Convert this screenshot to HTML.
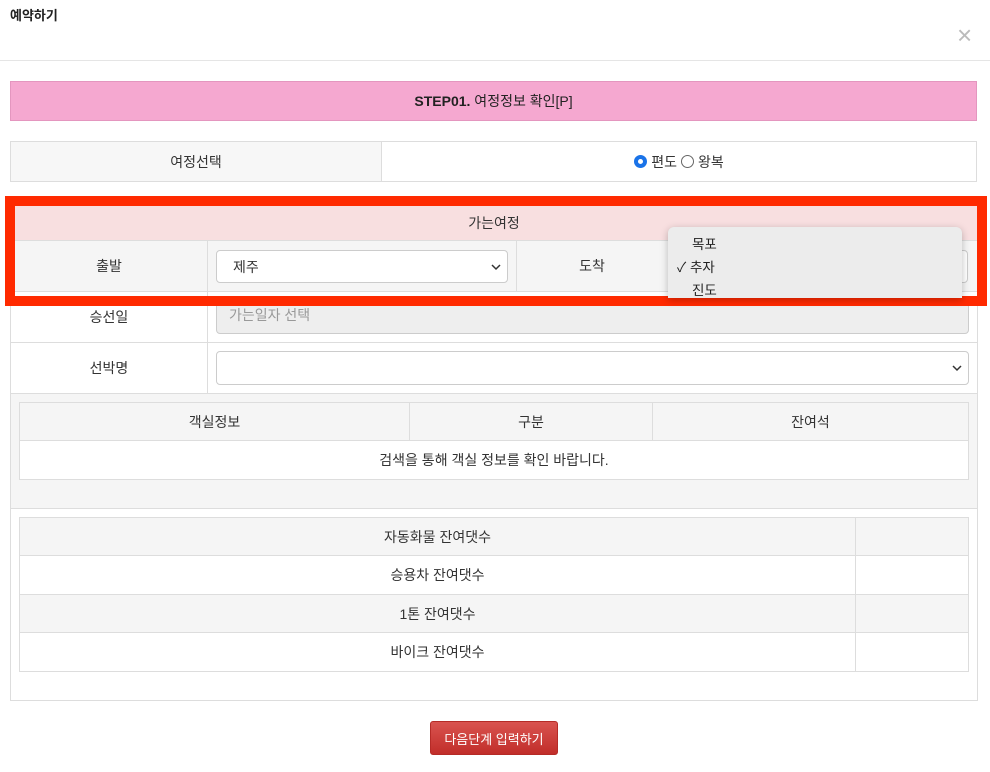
<!DOCTYPE html>
<html><head><meta charset="utf-8"><style>
*{box-sizing:border-box;margin:0;padding:0}
body{width:990px;height:772px;background:#fff;font-family:"Liberation Sans","Noto Sans CJK KR",sans-serif;font-size:14px;color:#333;position:relative;overflow:hidden}
.a{position:absolute}
.c{display:flex;align-items:center;justify-content:center}
.b{border:1px solid #ddd}
.sel{position:absolute;background:#fff;border:1px solid #ccc;border-radius:4px;display:flex;align-items:center;padding-left:16px;font-size:14px}
.sel svg{position:absolute;right:6px;top:50%;margin-top:-4px}
</style></head><body>
<div class="a" style="left:10px;top:5px;font-size:13px;font-weight:bold;color:#222">예약하기</div>
<div class="a" style="left:957px;top:20px;font-size:26px;color:#bbb;line-height:30px">×</div>
<div class="a" style="left:0;top:60px;width:990px;height:1px;background:#e5e5e5"></div>

<div class="a c" style="left:10px;top:81px;width:967px;height:40px;background:#f5a8d0;border:1px solid #e496bf;color:#222"><b>STEP01.</b>&nbsp;여정정보 확인[P]</div>

<div class="a b" style="left:10px;top:141px;width:967px;height:41px"></div>
<div class="a c" style="left:11px;top:142px;width:370px;height:39px;background:#f7f7f7">여정선택</div>
<div class="a" style="left:381px;top:142px;width:1px;height:39px;background:#ddd"></div>
<div class="a c" style="left:382px;top:142px;width:594px;height:39px;">
<span style="display:inline-block;width:13px;height:13px;border-radius:50%;border:4px solid #1a73e8;margin-right:4px"></span>편도&nbsp;<span style="display:inline-block;width:13px;height:13px;border-radius:50%;border:1px solid #666;margin-right:4px"></span>왕복</div>

<div class="a b" style="left:10px;top:200px;width:968px;height:501px"></div>
<div class="a c" style="left:11px;top:206px;width:966px;height:34px;background:#f8dfe0;color:#333">가는여정</div>
<div class="a" style="left:11px;top:240px;width:966px;height:52px;background:#f5f5f5;border-top:1px solid #ddd;border-bottom:1px solid #ddd"></div>
<div class="a c" style="left:11px;top:240px;width:196px;height:52px">출발</div>
<div class="a" style="left:207px;top:240px;width:1px;height:103px;background:#ddd"></div>
<div class="sel" style="left:216px;top:250px;width:292px;height:33px">제주<svg width="10" height="8"><path d="M1 2l4 4 4-4" fill="none" stroke="#333" stroke-width="1.5"/></svg></div>
<div class="a" style="left:516px;top:240px;width:1px;height:52px;background:#ddd"></div>
<div class="a c" style="left:517px;top:240px;width:150px;height:52px">도착</div>
<div class="sel" style="left:676px;top:250px;width:292px;height:33px"></div>

<div class="a c" style="left:11px;top:292px;width:196px;height:51px;border-bottom:1px solid #ddd;">승선일</div>
<div class="a" style="left:216px;top:297px;width:753px;height:37px;background:#eee;border:1px solid #ccc;border-radius:4px;padding-left:12px;line-height:35px;color:#999">가는일자 선택</div>
<div class="a" style="left:11px;top:342px;width:966px;height:1px;background:#ddd"></div>
<div class="a c" style="left:11px;top:343px;width:196px;height:50px">선박명</div>
<div class="a" style="left:207px;top:343px;width:1px;height:50px;background:#ddd"></div>
<div class="sel" style="left:216px;top:351px;width:753px;height:34px"><svg width="10" height="8"><path d="M1 2l4 4 4-4" fill="none" stroke="#333" stroke-width="1.5"/></svg></div>
<div class="a" style="left:11px;top:393px;width:966px;height:116px;background:#f5f5f5;border-top:1px solid #ddd;border-bottom:1px solid #ddd"></div>
<div class="a b" style="left:19px;top:402px;width:950px;height:78px;background:#fff"></div>
<div class="a" style="left:20px;top:403px;width:948px;height:38px;background:#f5f5f5;border-bottom:1px solid #ddd"></div>
<div class="a c" style="left:20px;top:403px;width:389px;height:38px">객실정보</div>
<div class="a" style="left:409px;top:403px;width:1px;height:38px;background:#ddd"></div>
<div class="a c" style="left:410px;top:403px;width:242px;height:38px">구분</div>
<div class="a" style="left:652px;top:403px;width:1px;height:38px;background:#ddd"></div>
<div class="a c" style="left:653px;top:403px;width:315px;height:38px">잔여석</div>
<div class="a c" style="left:20px;top:441px;width:948px;height:38px">검색을 통해 객실 정보를 확인 바랍니다.</div>

<div class="a b" style="left:19px;top:517px;width:950px;height:155px;background:#fff"></div>
<div class="a c" style="left:20px;top:518px;width:835px;height:38px;background:#f5f5f5;border-bottom:1px solid #ddd">자동화물 잔여댓수</div>
<div class="a" style="left:855px;top:518px;width:113px;height:38px;background:#f5f5f5;border-bottom:1px solid #ddd"></div>
<div class="a c" style="left:20px;top:556px;width:835px;height:39px;border-bottom:1px solid #ddd">승용차 잔여댓수</div>
<div class="a" style="left:855px;top:556px;width:113px;height:39px;border-bottom:1px solid #ddd"></div>
<div class="a c" style="left:20px;top:595px;width:835px;height:38px;background:#f5f5f5;border-bottom:1px solid #ddd">1톤 잔여댓수</div>
<div class="a" style="left:855px;top:595px;width:113px;height:38px;background:#f5f5f5;border-bottom:1px solid #ddd"></div>
<div class="a c" style="left:20px;top:633px;width:835px;height:38px">바이크 잔여댓수</div>
<div class="a" style="left:855px;top:518px;width:1px;height:153px;background:#ddd"></div>

<div class="a" style="left:5px;top:196px;width:982px;height:110px;border:10px solid #ff2a00"></div>
<div class="a" style="left:668px;top:227px;width:294px;height:71px;background:#ececec;border-radius:6px 6px 0 0;box-shadow:0 2px 8px rgba(0,0,0,.25);font-size:13.5px;color:#222">
<div class="a" style="left:24px;top:6px">목포</div>
<div class="a" style="left:9px;top:29px">✓ 추자</div>
<div class="a" style="left:24px;top:52px">진도</div>
</div>

<div class="a c" style="left:430px;top:721px;width:128px;height:34px;border-radius:3px;background:linear-gradient(#d9534f,#c12e2a);border:1px solid #b52b27;color:#fff;font-size:13px">다음단계 입력하기</div>
</body></html>
